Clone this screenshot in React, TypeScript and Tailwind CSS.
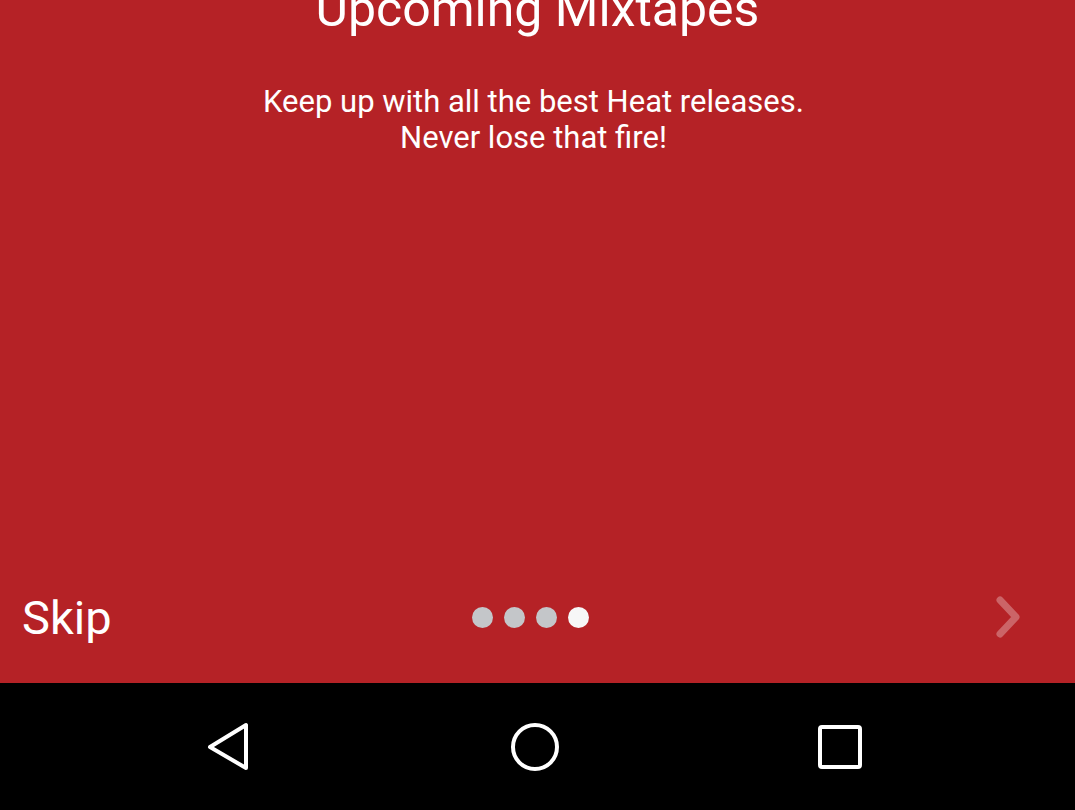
export default function App() {
  return (
    <div className="w-[1075px] h-[810px] flex flex-col overflow-hidden" style={{ fontFamily: "Roboto, 'Noto Sans', sans-serif" }}>
      <div className="flex-1 bg-[#b52226] flex flex-col text-white">
        <div className="flex flex-col items-center mt-[-19px]">
          <h1 className="text-[50px] leading-[56px] font-normal">Upcoming Mixtapes</h1>
          <p className="mt-[47px] text-[31px] leading-[36px] text-center mr-[8px]">
            Keep up with all the best Heat releases.
            <br />
            Never lose that fire!
          </p>
        </div>
        <div className="flex-1" />
        <div className="h-[100px] grid grid-cols-[1fr_auto_1fr] items-center pl-[22px] pr-[50px] pb-[32px]">
          <span className="text-[47px] leading-none">Skip</span>
          <div className="flex gap-[11px] items-center ml-[13px]">
            <span className="w-[21px] h-[21px] rounded-full bg-[#c4c6c9]" />
            <span className="w-[21px] h-[21px] rounded-full bg-[#c4c6c9]" />
            <span className="w-[21px] h-[21px] rounded-full bg-[#c4c6c9]" />
            <span className="w-[21px] h-[21px] rounded-full bg-[#f7f7f7]" />
          </div>
          <div className="flex justify-end">
            <svg width="32" height="48" viewBox="0 0 32 48">
              <path d="M7 7 L23 24 L7 41" fill="none" stroke="rgba(255,255,255,0.3)" strokeWidth="7" strokeLinecap="round" strokeLinejoin="round" />
            </svg>
          </div>
        </div>
      </div>
      <div className="h-[127px] bg-black flex items-center">
        <svg width="50" height="50" viewBox="0 0 50 50" className="ml-[204px]">
          <path d="M42 3 L42 46 L6 25 Z" fill="none" stroke="white" strokeWidth="4" strokeLinejoin="round" />
        </svg>
        <svg width="52" height="52" viewBox="0 0 52 52" className="ml-[255px]">
          <circle cx="26" cy="26" r="22" fill="none" stroke="white" strokeWidth="4" />
        </svg>
        <svg width="48" height="48" viewBox="0 0 48 48" className="ml-[255px]">
          <rect x="4" y="4" width="40" height="40" rx="2" fill="none" stroke="white" strokeWidth="4" />
        </svg>
      </div>
    </div>
  );
}
